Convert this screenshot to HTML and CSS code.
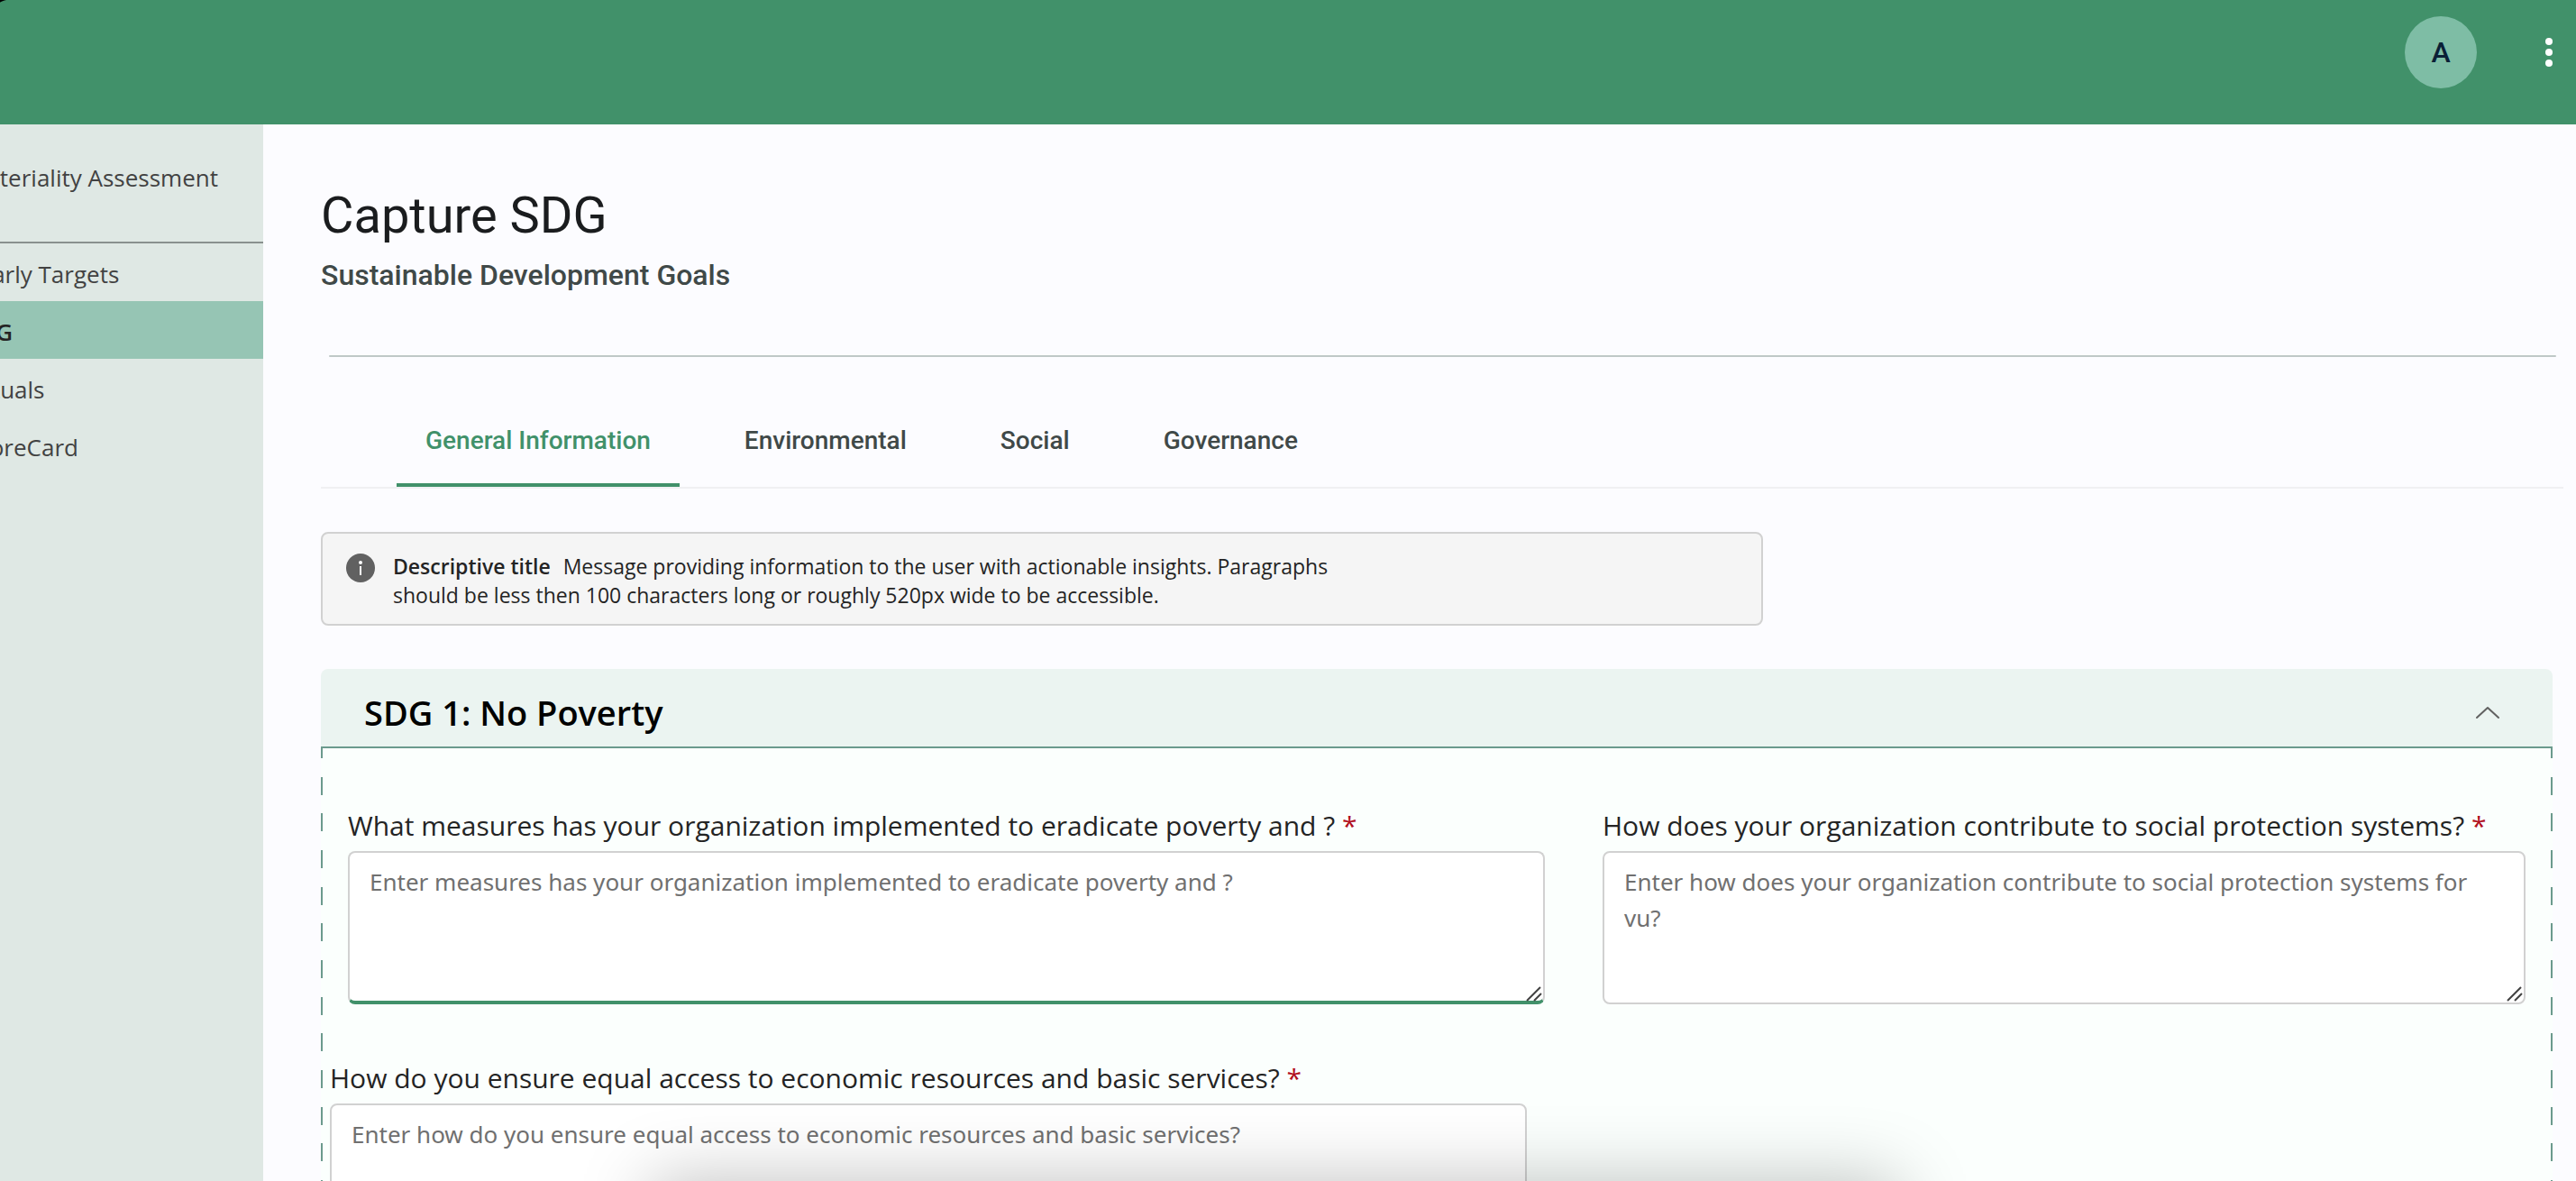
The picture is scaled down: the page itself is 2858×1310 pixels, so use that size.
FILE: index.html
```html
<!DOCTYPE html>
<html lang="en">
<head>
<meta charset="utf-8">
<meta name="viewport" content="width=device-width, initial-scale=1">
<title>Capture SDG</title>
<link rel="stylesheet" href="styles.css">
</head>
<body>
<header class="topbar">
  <button class="avatar" type="button" aria-label="Account">A</button>
  <button class="menu" type="button" aria-label="More options">
    <svg width="8" height="32" viewBox="0 0 8 32" fill="#fff"><circle cx="4" cy="4" r="4"/><circle cx="4" cy="16" r="4"/><circle cx="4" cy="28" r="4"/></svg>
  </button>
</header>
<div class="layout">
  <nav class="sidebar">
    <a class="nav-item nav-item-top" href="#">Materiality Assessment</a>
    <a class="nav-item" href="#">Yearly Targets</a>
    <a class="nav-item nav-item-active" href="#">SDG</a>
    <a class="nav-item" href="#">Actuals</a>
    <a class="nav-item" href="#">ScoreCard</a>
  </nav>
  <main class="content">
    <h1 class="title">Capture SDG</h1>
    <p class="subtitle">Sustainable Development Goals</p>
    <hr class="rule">
    <div class="tabs" role="tablist">
      <button class="tab tab-active" role="tab" aria-selected="true" type="button">General Information</button>
      <button class="tab" role="tab" type="button">Environmental</button>
      <button class="tab" role="tab" type="button">Social</button>
      <button class="tab" role="tab" type="button">Governance</button>
    </div>
    <div class="notice">
      <svg class="notice-icon" width="32" height="32" viewBox="0 0 32 32"><circle cx="16" cy="16" r="16" fill="#616161"/><circle cx="16" cy="10" r="2" fill="#fff"/><path d="M16 14v10" stroke="#fff" stroke-width="2"/></svg>
      <p class="notice-text"><strong class="notice-title">Descriptive title</strong>Message providing information to the user with actionable insights. Paragraphs should be less then 100 characters long or roughly 520px wide to be accessible.</p>
    </div>
    <section class="accordion">
      <h2 class="accordion-heading">
        <button class="accordion-toggle" type="button" aria-expanded="true">
          <span>SDG 1: No Poverty</span>
          <svg width="28" height="16" viewBox="0 0 28 16" fill="none" stroke="#616161" stroke-width="2" stroke-linecap="round" stroke-linejoin="round"><path d="M2 14L14 3l12 11"/></svg>
        </button>
      </h2>
      <div class="panel">
        <div class="row">
          <div class="field">
            <label class="label" for="measures">What measures has your organization implemented to eradicate poverty and ? <span class="required">*</span></label>
            <div class="box">
              <textarea class="input input-focused" id="measures" placeholder="Enter measures has your organization implemented to eradicate poverty and ?"></textarea>
              <svg class="grip" width="18" height="18" viewBox="0 0 18 18" fill="none" stroke="#424242" stroke-width="2"><path d="M1 17L16 2M9 17l8-8"/></svg>
            </div>
          </div>
          <div class="field">
            <label class="label" for="protection">How does your organization contribute to social protection systems? <span class="required">*</span></label>
            <div class="box">
              <textarea class="input" id="protection" placeholder="Enter how does your organization contribute to social protection systems for vu?"></textarea>
              <svg class="grip" width="18" height="18" viewBox="0 0 18 18" fill="none" stroke="#424242" stroke-width="2"><path d="M1 17L16 2M9 17l8-8"/></svg>
            </div>
          </div>
        </div>
        <div class="row row-outdent">
          <div class="field">
            <label class="label" for="access">How do you ensure equal access to economic resources and basic services? <span class="required">*</span></label>
            <div class="box">
              <textarea class="input" id="access" placeholder="Enter how do you ensure equal access to economic resources and basic services?"></textarea>
            </div>
          </div>
        </div>
      </div>
    </section>
  </main>
</div>
<div class="sheet-shadow"></div>
</body>
</html>
```
FILE: styles.css
```css
* { box-sizing: border-box; }

body {
  margin: 0;
  height: 100vh;
  overflow: hidden;
  display: flex;
  flex-direction: column;
  background: #fcfcff;
  color: #242424;
  font-family: "Open Sans", "Noto Sans", sans-serif;
}

button {
  border: 0;
  padding: 0;
  background: none;
  font: inherit;
  color: inherit;
}

.topbar {
  flex: none;
  height: 138px;
  display: flex;
  justify-content: flex-end;
  align-items: flex-start;
  gap: 76px;
  padding: 18px 26px 0 0;
  background: radial-gradient(circle at 12px 24px, transparent 24px, #000 25px) 0 0 / 8px 4px no-repeat, #41916a;
}

.avatar {
  width: 80px;
  height: 80px;
  border-radius: 50%;
  background: #7ebda5;
  color: #0a2036;
  font: 500 32px/80px Roboto, sans-serif;
}

.menu {
  height: 80px;
  display: flex;
  align-items: center;
}

.layout {
  flex: 1;
  min-height: 0;
  display: flex;
}

.sidebar {
  flex: none;
  width: 330px;
  margin-left: -38px;
  background: #dfe8e4;
}

.nav-item {
  display: flex;
  align-items: center;
  height: 64px;
  padding-top: 4px;
  color: #424242;
  font-size: 26px;
  white-space: nowrap;
  text-decoration: none;
}

.nav-item-top {
  height: 132px;
  padding-bottom: 16px;
  border-bottom: 2px solid #89918e;
}

.nav-item-active {
  background: #96c5b4;
  color: #242424;
  font-weight: 600;
}

.content {
  flex: 1;
  min-width: 0;
  padding: 65px 26px 0 64px;
}

.title {
  margin: 0;
  font: 400 56px/72px Roboto, sans-serif;
  color: #1a1c1e;
}

.subtitle {
  margin: 6px 0 0;
  font: 500 32px/48px Roboto, sans-serif;
  color: #404948;
}

.rule {
  height: 2px;
  margin: 65px -4px 0 9px;
  border: 0;
  border-radius: 8px;
  background: #bfc8c7;
}

.tabs {
  display: flex;
  gap: 40px;
  margin-top: 40px;
  margin-right: -12px;
  padding-left: 84px;
  border-bottom: 2px solid #f0f0f2;
}

.tab {
  height: 104px;
  padding: 6px 32px 0;
  border-bottom: 4px solid transparent;
  color: #404948;
  font: 500 28px/40px Roboto, sans-serif;
}

.tab-active {
  border-color: #41916a;
  color: #41916a;
}

.notice {
  display: flex;
  align-items: flex-start;
  gap: 20px;
  max-width: 1600px;
  margin-top: 48px;
  padding: 20px 26px 16px;
  border: 2px solid #d1d1d1;
  border-radius: 8px;
  background: #f5f5f5;
}

.notice-icon {
  flex: none;
  margin-top: 2px;
}

.notice-text {
  max-width: 1060px;
  margin: 0;
  font-size: 23px;
  line-height: 32px;
}

.notice-title {
  margin-right: 14px;
  font-weight: 600;
}

.accordion { margin-top: 48px; }

.accordion-heading {
  margin: 0;
  font-weight: 600;
  font-size: 38px;
  line-height: 48px;
}

.accordion-toggle {
  display: flex;
  justify-content: space-between;
  align-items: center;
  width: 100%;
  padding: 24px 58px 14px 48px;
  border-bottom: 2px solid #6b9a8d;
  border-radius: 8px 8px 0 0;
  background: #ebf4f1;
  color: #000;
}

.panel {
  --dashes: linear-gradient(#6b9a8d 20px, transparent 20px 41px, #6b9a8d 41px 61px, transparent 61px 81px, #6b9a8d 81px 101px, transparent 101px);
  padding: 64px 30px;
  background:
    var(--dashes) 0 -9px / 2px 122px repeat-y,
    var(--dashes) 100% -9px / 2px 122px repeat-y,
    #fbfffd;
}

.row {
  display: grid;
  grid-template-columns: 83fr 64fr;
  gap: 64px;
}

.row-outdent { margin: 60px 20px 0 -20px; }

.field { min-width: 0; }

.label {
  display: block;
  margin-bottom: 6px;
  font-size: 30px;
  line-height: 44px;
  white-space: nowrap;
}

.required { color: #b10e1c; }

.box { position: relative; }

.input {
  display: block;
  width: 100%;
  height: 170px;
  padding: 12px 22px;
  border: 2px solid #d1d1d1;
  border-radius: 8px;
  background: #fff;
  color: #242424;
  font: 26px/40px "Noto Sans", "Open Sans", sans-serif;
  resize: none;
}

.input::placeholder {
  color: #707070;
  opacity: 1;
}

.input-focused { border-bottom: 4px solid #41916a; }

.grip {
  position: absolute;
  right: 3px;
  bottom: 3px;
}

.sheet-shadow {
  position: fixed;
  left: 26%;
  right: 27%;
  bottom: -80px;
  height: 60px;
  box-shadow: 0 0 80px 20px rgba(0, 0, 0, .25);
  pointer-events: none;
}
```
